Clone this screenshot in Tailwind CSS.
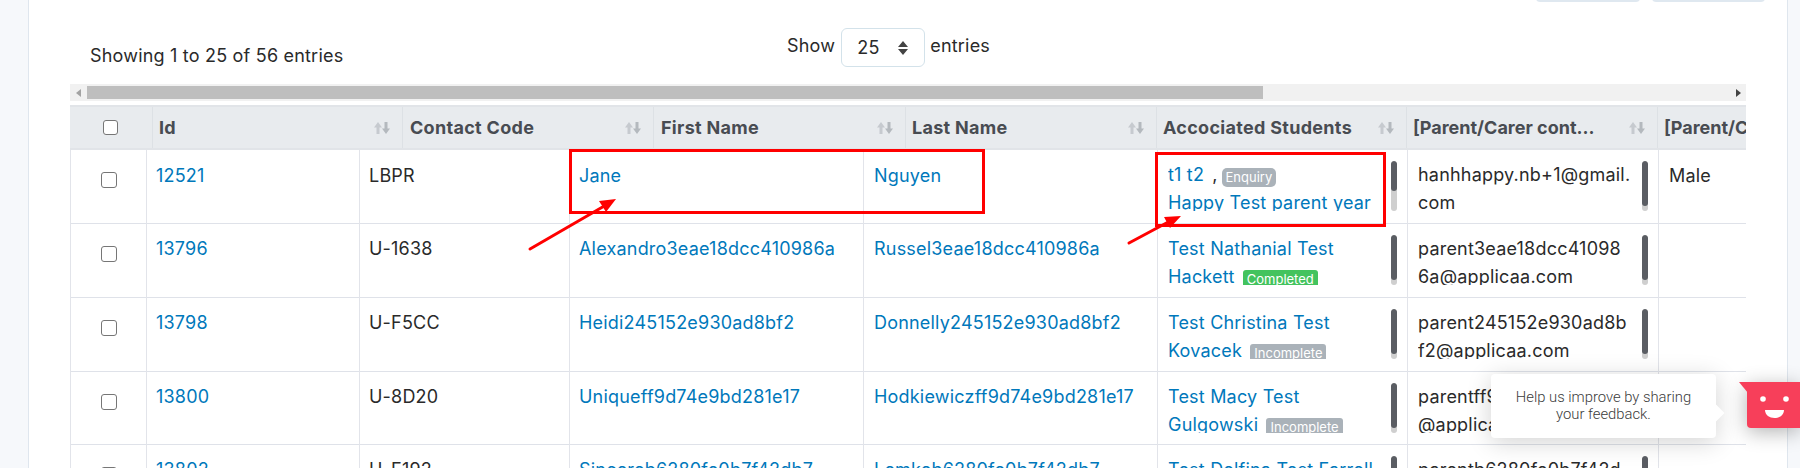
<!DOCTYPE html>
<html lang="en">
<head>
  <meta charset="UTF-8">
  <meta name="viewport" content="width=device-width, initial-scale=1.0">
  <title>Contacts</title>
  <script src="https://cdn.jsdelivr.net/npm/@tailwindcss/browser@4"></script>
</head>
<body class="bg-[#f6f8fb] h-[468px] overflow-hidden font-['Inter',sans-serif] font-normal tracking-[0.2px] text-[#2a2a2a] text-[18px]">
  <div class="relative h-[468px] w-[1800px] overflow-hidden">
    <!-- card -->
    <div class="relative ml-[28px] w-[1760px] h-[468px] bg-white border-x border-[#dfe6ee] pl-[41px]">
      <div class="absolute top-[-21px] left-[1507px] flex gap-[12px]">
        <div class="w-[104px] h-[23px] rounded bg-[#dfe8f0]"></div>
        <div class="w-[113px] h-[23px] rounded bg-[#dfe8f0]"></div>
      </div>

      <div class="flex h-[84px] w-[1676px]">
        <div class="w-[717px] pl-[20px] pt-[45px] leading-[22px]">Showing 1 to 25 of 56 entries</div>
        <div class="flex items-start pt-[28px] gap-[6px]">
          <span class="leading-[36px]">Show</span>
          <div class="w-[84px] h-[39px] rounded-md border border-[#d3e2ea] flex items-center justify-between pl-[15px] pr-[16px]">
            <span>25</span>
            <svg width="10" height="14" viewBox="0 0 10 14"><path d="M5 0l5 6H0zM5 14l5-6H0z" fill="#444"/></svg>
          </div>
          <span class="leading-[36px] -ml-[1px]">entries</span>
        </div>
      </div>

      <!-- horizontal scrollbar -->
      <div class="flex items-center w-[1676px] h-[17px] bg-[#f1f1f1]">
        <svg class="ml-[6px]" width="5" height="8" viewBox="0 0 5 8"><path d="M5 0v8L0 4z" fill="#a3a3a3"/></svg>
        <div class="ml-[6px] w-[1176px] h-[13px] bg-[#bebebe]"></div>
        <svg class="ml-[473px]" width="5" height="8" viewBox="0 0 5 8"><path d="M0 0v8l5-4z" fill="#444"/></svg>
      </div>

      <!-- header table -->
      <div class="mt-[4px] w-[1676px] overflow-hidden">
        <div class="flex h-[45px] w-[2000px] bg-[#e8ebee] border-y-2 border-[#e1e4e8] text-[#484c52] font-bold tracking-[0.3px]">
          <div class="w-[83px] flex items-center justify-center pr-[2px] border-r border-[#dde1e5]"><span class="block size-[15px] rounded-[3px] border border-[#767676] bg-white"></span></div>
          <div class="w-[250px] flex items-center justify-between pl-[6px] pr-[12px] border-r border-[#dde1e5]"><span>Id</span><svg width="16" height="12" viewBox="0 0 16 12"><path d="M4 0l4 5.500H5.500V12h-3V5.500H0z" fill="#c6cacf"/><path d="M12 12L8 6.500h2.500V0h3v6.500H16z" fill="#b4b9be"/></svg></div>
          <div class="w-[251px] flex items-center justify-between pl-[7px] pr-[12px] border-r border-[#dde1e5]"><span>Contact Code</span><svg width="16" height="12" viewBox="0 0 16 12"><path d="M4 0l4 5.500H5.500V12h-3V5.500H0z" fill="#c6cacf"/><path d="M12 12L8 6.500h2.500V0h3v6.500H16z" fill="#b4b9be"/></svg></div>
          <div class="w-[252px] flex items-center justify-between pl-[7px] pr-[12px] border-r border-[#dde1e5]"><span>First Name</span><svg width="16" height="12" viewBox="0 0 16 12"><path d="M4 0l4 5.500H5.500V12h-3V5.500H0z" fill="#c6cacf"/><path d="M12 12L8 6.500h2.500V0h3v6.500H16z" fill="#b4b9be"/></svg></div>
          <div class="w-[251px] flex items-center justify-between pl-[6px] pr-[12px] border-r border-[#dde1e5]"><span>Last Name</span><svg width="16" height="12" viewBox="0 0 16 12"><path d="M4 0l4 5.500H5.500V12h-3V5.500H0z" fill="#c6cacf"/><path d="M12 12L8 6.500h2.500V0h3v6.500H16z" fill="#b4b9be"/></svg></div>
          <div class="w-[250px] flex items-center justify-between pl-[6px] pr-[12px] border-r border-[#dde1e5]"><span>Accociated Students</span><svg width="16" height="12" viewBox="0 0 16 12"><path d="M4 0l4 5.500H5.500V12h-3V5.500H0z" fill="#c6cacf"/><path d="M12 12L8 6.500h2.500V0h3v6.500H16z" fill="#b4b9be"/></svg></div>
          <div class="w-[251px] flex items-center justify-between pl-[6px] pr-[12px] border-r border-[#dde1e5]"><span class="tracking-normal">[Parent/Carer cont...</span><svg width="16" height="12" viewBox="0 0 16 12"><path d="M4 0l4 5.500H5.500V12h-3V5.500H0z" fill="#c6cacf"/><path d="M12 12L8 6.500h2.500V0h3v6.500H16z" fill="#b4b9be"/></svg></div>
          <div class="w-[251px] pl-[6px] flex items-center"><span class="whitespace-nowrap tracking-normal">[Parent/Carer gender]</span></div>
        </div>
      </div>

      <!-- body table -->
      <div class="w-[1676px] overflow-hidden">
        <table class="w-[1676px] table-fixed border-collapse">
          <colgroup>
            <col class="w-[76px]"><col class="w-[213px]"><col class="w-[210px]"><col class="w-[294px]"><col class="w-[294px]"><col class="w-[250px]"><col class="w-[251px]"><col class="w-[88px]">
          </colgroup>
          <tbody class="leading-[28px]">
            <tr class="h-[73.500px] border-b border-[#dfe2e9] align-top">
              <td class="border-x border-[#e2e4ea] pl-[30px] pt-[22px]"><span class="block size-[16px] rounded-[3px] border border-[#767676]"></span></td>
              <td class="border-r border-[#e2e4ea] pl-[9px] pt-[12px] text-[#0078bb]">12521</td>
              <td class="border-r border-[#e2e4ea] pl-[9px] pt-[12px]">LBPR</td>
              <td class="border-r border-[#e2e4ea] pl-[9px] pt-[12px] text-[#0078bb]">Jane</td>
              <td class="border-r border-[#e2e4ea] pl-[10px] pt-[12px] text-[#0078bb]">Nguyen</td>
              <td class="border-r border-[#e2e4ea] pl-[10px] pt-[11px]">
                <div class="flex justify-between h-[50px] overflow-hidden">
                  <div class="w-[218px] overflow-hidden whitespace-nowrap"><span class="text-[#0078bb]">t1 t2</span><span class="ml-[8px] mr-[4px]">,</span><span class="inline-block tracking-normal align-[-1px] h-[19px] leading-[19px] px-[4px] rounded-[5px] bg-[#aab2b9] text-white text-[13px]">Enquiry</span><br><span class="text-[#0078bb]">Happy Test parent year</span></div>
                  <div class="w-[6px] h-[50px] mr-[10px] rounded-full bg-[#cfcfcf] overflow-hidden"><div class="h-[30px] rounded-full bg-[#5a5d63]"></div></div>
                </div>
              </td>
              <td class="border-r border-[#e2e4ea] pl-[10px] pt-[11px]">
                <div class="flex justify-between h-[50px] overflow-hidden">
                  <div class="w-[212px] whitespace-nowrap">hanhhappy.nb+1@gmail.<br>com</div>
                  <div class="w-[6px] h-[50px] mr-[10px] rounded-full bg-[#cfcfcf] overflow-hidden"><div class="h-[45px] rounded-full bg-[#5a5d63]"></div></div>
                </div>
              </td>
              <td class="pl-[10px] pt-[12px]">Male</td>
            </tr>
            <tr class="h-[73.500px] border-b border-[#dfe2e9] align-top">
              <td class="border-x border-[#e2e4ea] pl-[30px] pt-[22px]"><span class="block size-[16px] rounded-[3px] border border-[#767676]"></span></td>
              <td class="border-r border-[#e2e4ea] pl-[9px] pt-[11px] text-[#0078bb]">13796</td>
              <td class="border-r border-[#e2e4ea] pl-[9px] pt-[11px]">U-1638</td>
              <td class="border-r border-[#e2e4ea] pl-[9px] pt-[11px] text-[#0078bb]">Alexandro3eae18dcc410986a</td>
              <td class="border-r border-[#e2e4ea] pl-[10px] pt-[11px] text-[#0078bb]">Russel3eae18dcc410986a</td>
              <td class="border-r border-[#e2e4ea] pl-[10px] pt-[11px]">
                <div class="flex justify-between h-[50px] overflow-hidden">
                  <div class="w-[218px] overflow-hidden"><span class="text-[#0078bb]">Test Nathanial Test Hackett</span> <span class="inline-block tracking-normal ml-[3px] align-[-1px] h-[19px] leading-[19px] px-[4px] rounded-[3px] bg-[#43c35e] text-white text-[13px]">Completed</span></div>
                  <div class="w-[6px] h-[50px] mr-[10px] rounded-full bg-[#cfcfcf] overflow-hidden"><div class="h-[45px] rounded-full bg-[#5a5d63]"></div></div>
                </div>
              </td>
              <td class="border-r border-[#e2e4ea] pl-[10px] pt-[11px]">
                <div class="flex justify-between h-[50px] overflow-hidden">
                  <div class="w-[212px] whitespace-nowrap">parent3eae18dcc41098<br>6a@applicaa.com</div>
                  <div class="w-[6px] h-[50px] mr-[10px] rounded-full bg-[#cfcfcf] overflow-hidden"><div class="h-[45px] rounded-full bg-[#5a5d63]"></div></div>
                </div>
              </td>
              <td></td>
            </tr>
            <tr class="h-[74px] border-b border-[#dfe2e9] align-top">
              <td class="border-x border-[#e2e4ea] pl-[30px] pt-[22px]"><span class="block size-[16px] rounded-[3px] border border-[#767676]"></span></td>
              <td class="border-r border-[#e2e4ea] pl-[9px] pt-[11px] text-[#0078bb]">13798</td>
              <td class="border-r border-[#e2e4ea] pl-[9px] pt-[11px]">U-F5CC</td>
              <td class="border-r border-[#e2e4ea] pl-[9px] pt-[11px] text-[#0078bb]">Heidi245152e930ad8bf2</td>
              <td class="border-r border-[#e2e4ea] pl-[10px] pt-[11px] text-[#0078bb]">Donnelly245152e930ad8bf2</td>
              <td class="border-r border-[#e2e4ea] pl-[10px] pt-[11px]">
                <div class="flex justify-between h-[50px] overflow-hidden">
                  <div class="w-[218px] overflow-hidden"><span class="text-[#0078bb]">Test Christina Test Kovacek</span> <span class="inline-block tracking-normal ml-[3px] align-[-1px] h-[19px] leading-[19px] px-[4px] rounded-[3px] bg-[#aab2b9] text-white text-[13px]">Incomplete</span></div>
                  <div class="w-[6px] h-[50px] mr-[10px] rounded-full bg-[#cfcfcf] overflow-hidden"><div class="h-[45px] rounded-full bg-[#5a5d63]"></div></div>
                </div>
              </td>
              <td class="border-r border-[#e2e4ea] pl-[10px] pt-[11px]">
                <div class="flex justify-between h-[50px] overflow-hidden">
                  <div class="w-[212px] whitespace-nowrap">parent245152e930ad8b<br>f2@applicaa.com</div>
                  <div class="w-[6px] h-[50px] mr-[10px] rounded-full bg-[#cfcfcf] overflow-hidden"><div class="h-[45px] rounded-full bg-[#5a5d63]"></div></div>
                </div>
              </td>
              <td></td>
            </tr>
            <tr class="h-[73.500px] border-b border-[#dfe2e9] align-top">
              <td class="border-x border-[#e2e4ea] pl-[30px] pt-[22px]"><span class="block size-[16px] rounded-[3px] border border-[#767676]"></span></td>
              <td class="border-r border-[#e2e4ea] pl-[9px] pt-[11px] text-[#0078bb]">13800</td>
              <td class="border-r border-[#e2e4ea] pl-[9px] pt-[11px]">U-8D20</td>
              <td class="border-r border-[#e2e4ea] pl-[9px] pt-[11px] text-[#0078bb]">Uniqueff9d74e9bd281e17</td>
              <td class="border-r border-[#e2e4ea] pl-[10px] pt-[11px] text-[#0078bb]">Hodkiewiczff9d74e9bd281e17</td>
              <td class="border-r border-[#e2e4ea] pl-[10px] pt-[11px]">
                <div class="flex justify-between h-[50px] overflow-hidden">
                  <div class="w-[218px] overflow-hidden"><span class="text-[#0078bb]">Test Macy Test Gulgowski</span> <span class="inline-block tracking-normal ml-[3px] align-[-1px] h-[19px] leading-[19px] px-[4px] rounded-[3px] bg-[#aab2b9] text-white text-[13px]">Incomplete</span></div>
                  <div class="w-[6px] h-[50px] mr-[10px] rounded-full bg-[#cfcfcf] overflow-hidden"><div class="h-[45px] rounded-full bg-[#5a5d63]"></div></div>
                </div>
              </td>
              <td class="border-r border-[#e2e4ea] pl-[10px] pt-[11px]">
                <div class="flex justify-between h-[50px] overflow-hidden">
                  <div class="w-[212px] whitespace-nowrap">parentff9d74e9bd281e17<br>@applicaa.com</div>
                  <div class="w-[6px] h-[50px] mr-[10px] rounded-full bg-[#cfcfcf] overflow-hidden"><div class="h-[45px] rounded-full bg-[#5a5d63]"></div></div>
                </div>
              </td>
              <td></td>
            </tr>
            <tr class="h-[73.500px] align-top">
              <td class="border-x border-[#e2e4ea] pl-[30px] pt-[22px]"><span class="block size-[16px] rounded-[3px] border border-[#767676]"></span></td>
              <td class="border-r border-[#e2e4ea] pl-[9px] pt-[11px] text-[#0078bb]">13802</td>
              <td class="border-r border-[#e2e4ea] pl-[9px] pt-[11px]">U-F192</td>
              <td class="border-r border-[#e2e4ea] pl-[9px] pt-[11px] text-[#0078bb]">Sincereb6280fe0b7f42db7</td>
              <td class="border-r border-[#e2e4ea] pl-[10px] pt-[11px] text-[#0078bb]">Lemkeb6280fe0b7f42db7</td>
              <td class="border-r border-[#e2e4ea] pl-[10px] pt-[11px]">
                <div class="flex justify-between h-[50px] overflow-hidden">
                  <div class="w-[218px] overflow-hidden"><span class="text-[#0078bb]">Test Delfina Test Farrell</span></div>
                  <div class="w-[6px] h-[50px] mr-[10px] rounded-full bg-[#cfcfcf] overflow-hidden"><div class="h-[45px] rounded-full bg-[#5a5d63]"></div></div>
                </div>
              </td>
              <td class="border-r border-[#e2e4ea] pl-[10px] pt-[11px]">
                <div class="flex justify-between h-[50px] overflow-hidden">
                  <div class="w-[212px] whitespace-nowrap">parentb6280fe0b7f42d<br>b7@applicaa.com</div>
                  <div class="w-[6px] h-[50px] mr-[10px] rounded-full bg-[#cfcfcf] overflow-hidden"><div class="h-[45px] rounded-full bg-[#5a5d63]"></div></div>
                </div>
              </td>
              <td></td>
            </tr>
          </tbody>
        </table>
      </div>
    </div>

    <!-- screenshot annotations -->
    <div class="absolute left-[569px] top-[149px] w-[416px] h-[65px] border-[3px] border-[#ff0000]"></div>
    <div class="absolute left-[1155px] top-[152px] w-[231px] h-[75px] border-[3px] border-[#ff0000]"></div>
    <svg class="absolute left-0 top-0" width="1800" height="468" viewBox="0 0 1800 468" fill="none">
      <path d="M530 249L606 205" stroke="#f00" stroke-width="3" stroke-linecap="round"/>
      <path d="M616 199l-17 2 7 11z" fill="#f00"/>
      <path d="M1129 243L1172 220" stroke="#f00" stroke-width="3" stroke-linecap="round"/>
      <path d="M1181 216l-17 1 6 11z" fill="#f00"/>
    </svg>

    <!-- feedback widget -->
    <div class="absolute left-[1491px] top-[374px] w-[225px] h-[64px] rounded bg-white shadow-[0_4px_24px_rgba(0,0,0,0.18)] flex items-center justify-center text-center text-[14.800px] tracking-normal leading-[17px] text-[#3b3b3b] font-['Roboto',sans-serif] font-light">
      <div>Help us improve by sharing<br>your feedback.</div>
      <div class="absolute right-[-6px] top-[33px] size-[12px] rotate-45 bg-white"></div>
    </div>
    <div class="absolute left-[1747px] top-[382px] w-[53px] h-[46px] rounded-bl bg-[#f73f5a] shadow-[0_4px_20px_rgba(0,0,0,0.3)]">
      <svg class="absolute left-[-8px] top-0" width="61" height="46" viewBox="0 0 61 46" fill="none">
        <path d="M0 0h9v11z" fill="#f73f5a"/>
        <circle cx="24" cy="17" r="2.800" fill="#fff"/>
        <circle cx="47" cy="17" r="2.800" fill="#fff"/>
        <path d="M26 28h19c0 5-4.500 8-9.500 8S26 33 26 28z" fill="#fff"/>
      </svg>
    </div>
  </div>
</body>
</html>
